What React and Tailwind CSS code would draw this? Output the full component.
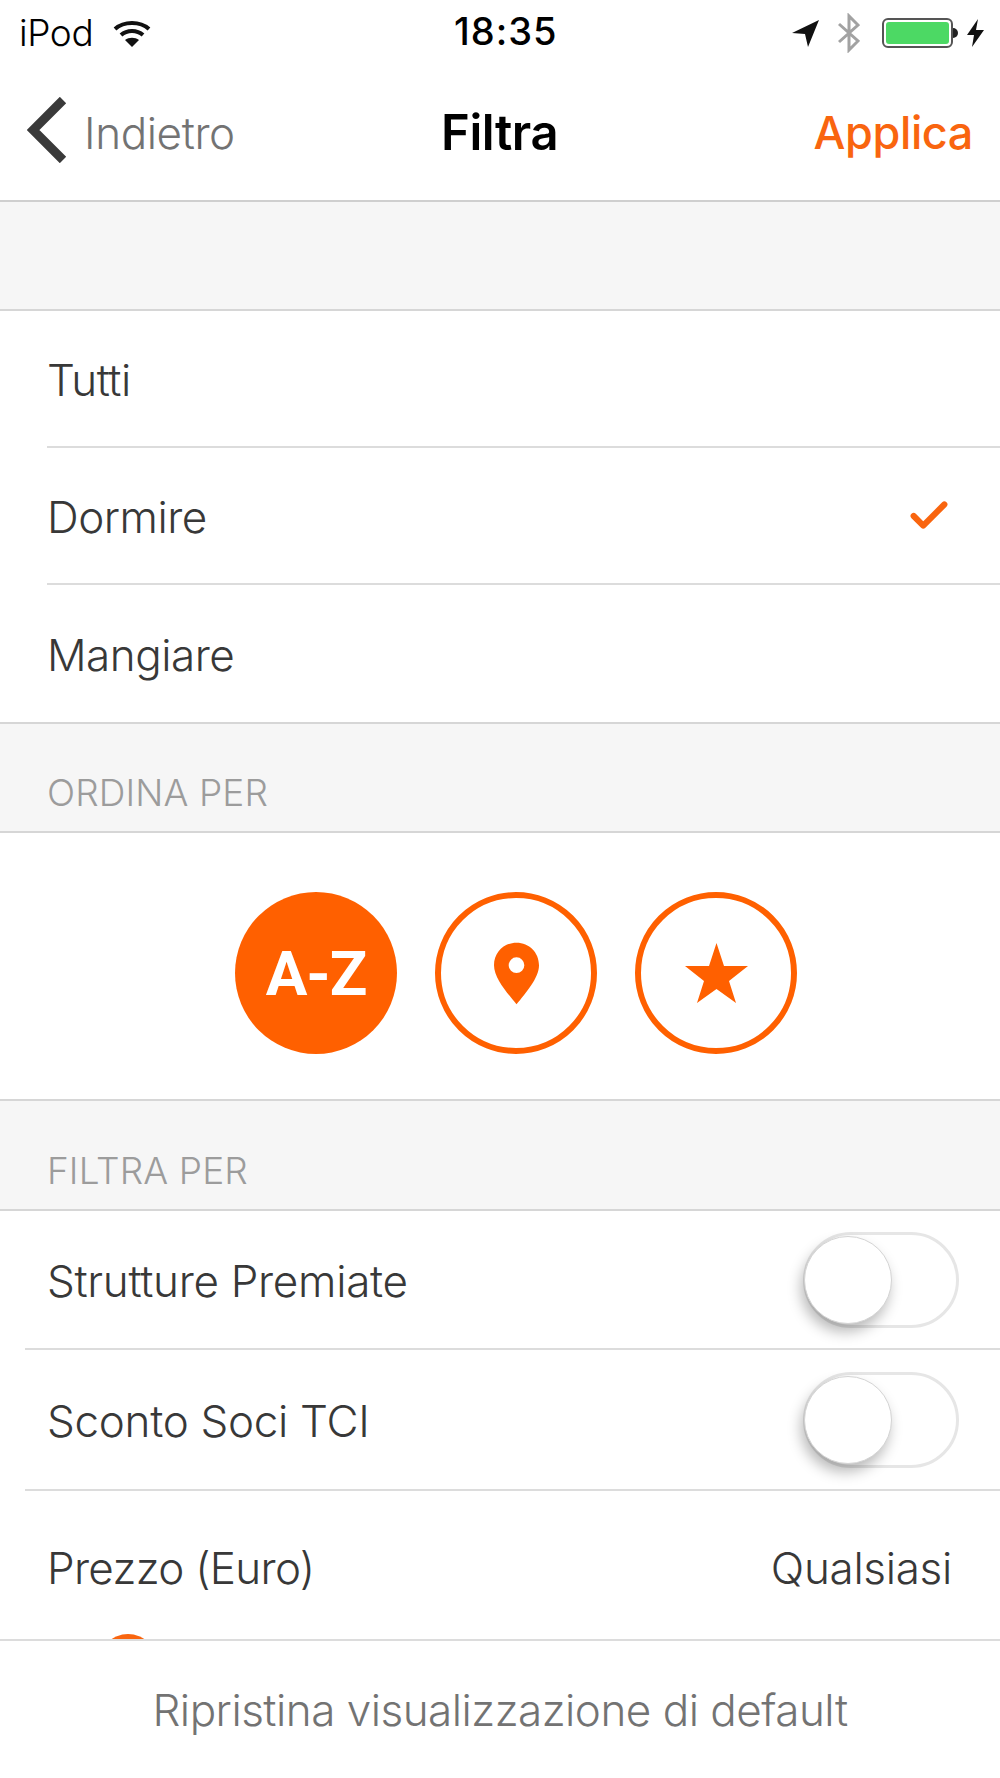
import { Check } from "lucide-react";

const font = { fontFamily: "Inter, sans-serif" };

const Toggle = () => (
  <div className="relative w-[156px] h-[96px] rounded-full border-[3px] border-[#e6e6e6] bg-white">
    <div className="absolute left-[-2px] top-[1px] w-[88px] h-[88px] rounded-full bg-white border border-[#d4d4d4] shadow-[-3px_8px_14px_rgba(0,0,0,0.28)]" />
  </div>
);

const ListRow = ({ label, divider = true, children }) => (
  <div className={`h-[137px] ml-[47px] flex items-center justify-between pr-[50px] ${divider ? "border-b-2 border-[#dcdcdc]" : ""}`}>
    <span className="text-[44px] font-[350] tracking-[-0.5px] text-[#383838] pt-[3px]">{label}</span>
    {children}
  </div>
);

const Section = ({ label, height = "h-[111px]" }) => (
  <div className={`${height} bg-[#f6f6f6] border-y-2 border-[#d6d6d6] flex items-end pl-[47px] pb-[11px]`}>
    <span className="text-[37px] font-[350] tracking-[0.1px] text-[#9c9c9c]">{label}</span>
  </div>
);

const SwitchRow = ({ label, height }) => (
  <div className={`${height} pl-[47px] pr-[41px] flex items-center justify-between`}>
    <span className="text-[44px] font-[350] tracking-[-0.3px] text-[#383838] pt-[3px]">{label}</span>
    <Toggle />
  </div>
);

export default function App() {
  return (
    <div style={font} className="w-[1000px] h-[1778px] bg-white flex flex-col overflow-hidden">
      {/* status bar */}
      <div className="h-[66px] relative flex items-center justify-between pl-[19px] pr-[16px] text-black">
        <div className="flex items-center gap-[20px]">
          <span className="text-[37px] font-[350] tracking-[-0.4px]">iPod</span>
          <svg width="38" height="27" viewBox="0 0 38 27" fill="none" stroke="#111" strokeWidth="4">
            <path d="M2 9 C11 1 27 1 36 9" />
            <path d="M8 15 C14 9.5 24 9.5 30 15" />
            <path d="M19 27 L12 20 C16 17 22 17 26 20 Z" fill="#111" stroke="none" />
          </svg>
        </div>
        <span className="absolute left-[454px] top-[3px] text-[38px] font-medium tracking-[1px]">18:35</span>
        <div className="flex items-center">
          <svg width="27" height="27" viewBox="0 0 27 27" className="mr-[19px]">
            <path d="M27 0 L0 13 L13 14 L16 27 Z" fill="#111" />
          </svg>
          <svg width="22" height="40" viewBox="0 0 22 40" fill="none" stroke="#a2a2a2" strokeWidth="3" className="mr-[22px]">
            <path d="M1 11 L20 28 L11 37 L11 3 L20 12 L1 29" />
          </svg>
          <div className="w-[71px] h-[30px] rounded-[6px] border-2 border-[#555] p-[2px]">
            <div className="w-full h-full rounded-[3px] bg-[#4cd964]" />
          </div>
          <div className="w-[5px] h-[10px] rounded-r-full bg-[#222] mr-[9px]" />
          <svg width="17" height="28" viewBox="0 0 17 28">
            <path d="M11 0 L0 16 L7 16 L5 28 L17 11 L9 11 Z" fill="#111" />
          </svg>
        </div>
      </div>

      {/* nav bar */}
      <div className="h-[136px] relative flex items-center justify-between border-b-2 border-[#cfcfcf] pl-[27px] pr-[27px]">
        <div className="flex items-center gap-[17px]">
          <svg width="40" height="66" viewBox="0 0 40 66" fill="none" stroke="#3a3a3a" strokeWidth="9" className="-mt-[6px]">
            <path d="M36 3 L6 33 L36 63" />
          </svg>
          <span className="text-[44px] font-[350] tracking-[-0.4px] text-[#737373]">Indietro</span>
        </div>
        <span className="absolute left-[441px] text-[49px] font-semibold tracking-[-0.4px] text-black">Filtra</span>
        <span className="text-[45px] font-medium tracking-[-0.4px] text-[#f9650f]">Applica</span>
      </div>

      {/* scrollable content */}
      <div className="flex-1 overflow-hidden">
        <div className="h-[109px] bg-[#f6f6f6] border-b-2 border-[#d6d6d6]" />
        <ListRow label="Tutti" />
        <ListRow label="Dormire">
          <Check size={46} color="#f9650f" strokeWidth={3.2} className="-mr-[2px]" />
        </ListRow>
        <ListRow label="Mangiare" divider={false} />

        <Section label="ORDINA PER" />
        <div className="h-[266px] flex items-start gap-[38px] pl-[235px] pt-[59px]">
          <div className="w-[162px] h-[162px] rounded-full bg-[#ff6000] flex items-center justify-center">
            <span className="text-[62px] font-bold tracking-[-1px] text-white" style={{ fontFamily: "Roboto, sans-serif" }}>A-Z</span>
          </div>
          <div className="w-[162px] h-[162px] rounded-full border-[6px] border-[#ff6000] flex items-center justify-center">
            <svg width="45" height="63" viewBox="0 0 46 63">
              <path fillRule="evenodd" fill="#ff6000" d="M23 0 C36 0 46 10 46 23 C46 36 32 52 23 63 C14 52 0 36 0 23 C0 10 10 0 23 0 Z M23 15 A8 8 0 1 0 23 31 A8 8 0 1 0 23 15 Z" />
            </svg>
          </div>
          <div className="w-[162px] h-[162px] rounded-full border-[6px] border-[#ff6000] flex items-center justify-center">
            <svg width="63" height="60" viewBox="0 0 63 60">
              <path fill="#ff6000" d="M31.5 0 L39 23 L63 23 L44 38 L51 60 L31.5 46 L12 60 L19 38 L0 23 L24 23 Z" />
            </svg>
          </div>
        </div>

        <Section label="FILTRA PER" height="h-[112px]" />
        <SwitchRow label="Strutture Premiate" height="h-[137px]" />
        <div className="h-[2px] ml-[25px] bg-[#dcdcdc]" />
        <SwitchRow label="Sconto Soci TCI" height="h-[139px]" />
        <div className="h-[2px] ml-[25px] bg-[#dcdcdc]" />
        <div className="pl-[47px] pr-[48px] pt-[44px] flex items-center justify-between">
          <span className="text-[44px] font-[350] tracking-[-0.7px] text-[#383838]">Prezzo (Euro)</span>
          <span className="text-[44px] font-[350] tracking-[-0.3px] text-[#383838]">Qualsiasi</span>
        </div>
        <div className="mt-[33px] ml-[99px] w-[58px] h-[58px] rounded-full bg-[#f9650f]" />
      </div>

      {/* footer */}
      <div className="h-[139px] shrink-0 border-t-2 border-[#dcdcdc] bg-white flex items-center justify-center pt-[1px]">
        <span className="text-[44px] font-[350] tracking-[-0.5px] text-[#737373]">Ripristina visualizzazione di default</span>
      </div>
    </div>
  );
}
